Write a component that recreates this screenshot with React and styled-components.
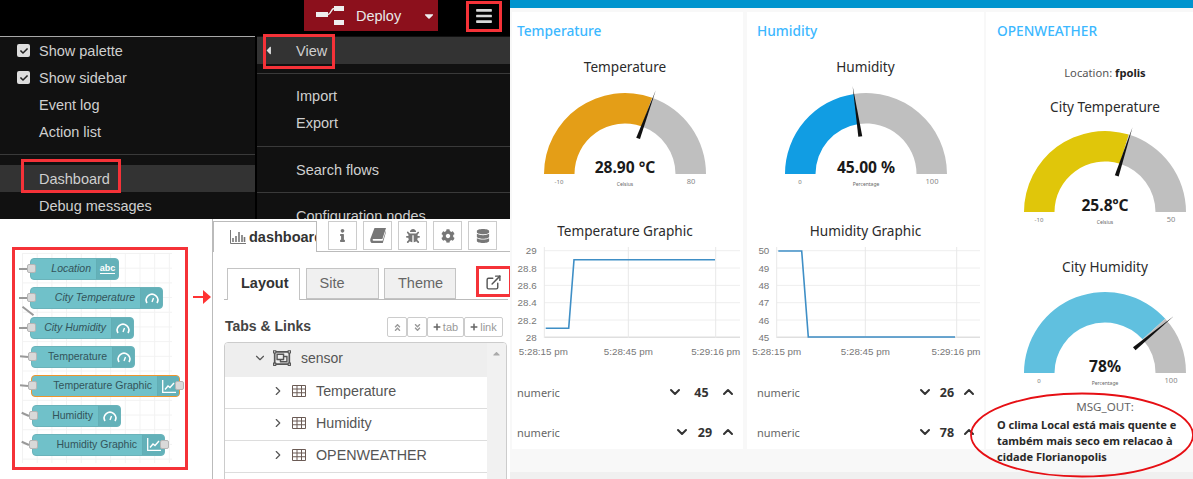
import styled, { createGlobalStyle } from "styled-components";
import { ChevronDown, ChevronRight, ChevronUp, ExternalLink } from "lucide-react";
import {
    FaAngleDoubleDown,
    FaAngleDoubleUp,
    FaBars,
    FaBug,
    FaCaretDown,
    FaCaretLeft,
    FaCaretUp,
    FaCheck,
    FaCog,
    FaDatabase,
    FaInfo,
    FaPlus,
    FaRegObjectGroup,
} from "react-icons/fa";

const GlobalStyle = createGlobalStyle`
    html, body {
        margin: 0;
        background: #ffffff;
        overflow: hidden;
    }
    * {
        box-sizing: border-box;
    }
`;

/*Drawings ------------*/
const DeployIcon = () => (
    <svg width="28" height="20" viewBox="0 0 28 20">
        <rect x="0" y="6" width="12" height="5" fill="#eee" />
        <rect x="18" y="0" width="10" height="5" fill="#eee" />
        <rect x="18" y="14" width="10" height="5" fill="#eee" />
        <path d="M12 8.5 C15 8.5 15 2.5 18 2.5" stroke="#eee" strokeWidth="1.5" fill="none" />
    </svg>
);

const BarsIcon = () => (
    <svg width="16" height="14" viewBox="0 0 16 14">
        <path d="M0.5 0V13.5H16" stroke="#777" fill="none" />
        <path d="M3 12V8M6 12V6M9 12V2M12 12V5M14.5 12V7" stroke="#777" strokeWidth="1.6" />
    </svg>
);

const BookIcon = () => (
    <svg width="16" height="15" viewBox="0 0 16 15">
        <path
            d="M4.5 0H16L12.4 11H3.6C2.4 11 2.2 12.8 3.6 12.8H12.6L16 2.5V4L12.8 15H2.6C0.6 15 -0.3 12.8 0.5 10.5Z"
            fill="currentColor"
        />
    </svg>
);

const TableIcon = () => (
    <svg width="14" height="12" viewBox="0 0 14 12">
        <path
            d="M0.5 0.5H13.5V11.5H0.5ZM0.5 4H13.5M0.5 7.75H13.5M5 0.5V11.5M9.5 0.5V11.5"
            stroke="#6b5b55"
            fill="none"
        />
    </svg>
);

const NodeGlyph = ({ kind }) => {
    if (kind === "abc") return <AbcText>abc</AbcText>;
    if (kind === "chart") {
        return (
            <svg width="14" height="13" viewBox="0 0 14 13">
                <path d="M0.7 0V12.3H14" stroke="#fff" strokeWidth="1.3" fill="none" />
                <path d="M3 9.5L6 6L8 7.5L12 3" stroke="#fff" strokeWidth="1.4" fill="none" />
            </svg>
        );
    }
    return (
        <svg width="14" height="12" viewBox="0 0 14 12">
            <path d="M2 11 A5.8 5.8 0 1 1 12 11" stroke="#fff" strokeWidth="1.6" fill="none" />
            <path d="M7 10 L8.5 6" stroke="#fff" strokeWidth="1.4" />
        </svg>
    );
};

const polar = (r, fraction) => {
    const angle = Math.PI * (1 - fraction);
    return [100 + r * Math.cos(angle), 91 - r * Math.sin(angle)];
};

const arc = (from, to) => {
    const [ax, ay] = polar(81, from);
    const [bx, by] = polar(81, to);
    const [cx, cy] = polar(50.5, to);
    const [dx, dy] = polar(50.5, from);
    return `M${ax} ${ay}A81 81 0 0 1 ${bx} ${by}L${cx} ${cy}A50.5 50.5 0 0 0 ${dx} ${dy}Z`;
};

const Gauge = ({ title, titleHeight, value, fraction, needle, color, min, max, unit }) => {
    const [bx, by] = polar(38, needle);
    const [tx, ty] = polar(89, needle);
    const angle = Math.PI * (1 - needle);
    const nx = 2 * Math.sin(angle);
    const ny = 2 * Math.cos(angle);

    return (
        <GaugeBlock>
            <WidgetTitle $height={titleHeight}>{title}</WidgetTitle>
            <GaugeSvg viewBox="0 0 200 110">
                <path d={arc(0, fraction)} fill={color} />
                <path d={arc(fraction, 1)} fill="#bfbfbf" />
                <path d={`M${bx - nx} ${by - ny}L${bx + nx} ${by + ny}L${tx} ${ty}Z`} fill="#111" />
                <GaugeValue x="100" y="90">{value}</GaugeValue>
                <GaugeMin x="34" y="101">{min}</GaugeMin>
                <GaugeMax x="166" y="101">{max}</GaugeMax>
                <GaugeUnit x="100" y="103">{unit}</GaugeUnit>
            </GaugeSvg>
        </GaugeBlock>
    );
};

const Chart = ({ title, grid, right, yLabels, xLabels, labelX, line }) => (
    <ChartBlock>
        <WidgetTitle $height={32}>{title}</WidgetTitle>
        <ChartSvg viewBox="0 0 240 110">
            {yLabels.map((label, i) => {
                const y = 3.7 + i * 17.33;
                const isAxis = i === yLabels.length - 1;
                return (
                    <g key={label}>
                        <line
                            x1={grid[0]}
                            x2={right}
                            y1={y}
                            y2={y}
                            stroke={isAxis ? "#dfdfdf" : "#eeeeee"}
                            strokeWidth={isAxis ? 1.5 : 1}
                        />
                        <AxisLabel x={labelX} y={y + 3.5} textAnchor="end">{label}</AxisLabel>
                    </g>
                );
            })}
            {grid.map((x) => (
                <line key={x} x1={x} x2={x} y1="0" y2="91" stroke="#e8e8e8" />
            ))}
            <polyline points={line} fill="none" stroke="#3f8fc6" strokeWidth="1.6" />
            {xLabels.map(([x, label]) => (
                <AxisLabel key={label} x={x} y="107.5" textAnchor="middle">{label}</AxisLabel>
            ))}
        </ChartSvg>
    </ChartBlock>
);

const Numeric = ({ inset, value, span }) => (
    <NumericRow $inset={inset}>
        <NumericLabel>numeric</NumericLabel>
        <ChevronDown size={16} strokeWidth={3} color="#333" />
        <NumericValue $width={span - 16}>{value}</NumericValue>
        <ChevronUp size={16} strokeWidth={3} color="#333" />
    </NumericRow>
);

const nodes = [
    { label: "Location", left: 8, width: 89, italic: true, icon: "abc" },
    { label: "City Temperature", left: 8, width: 133, italic: true, icon: "gauge" },
    { label: "City Humidity", left: 8, width: 104, italic: true, icon: "gauge" },
    { label: "Temperature", left: 9, width: 104, slant: 6, icon: "gauge" },
    { label: "Temperature Graphic", left: 9, width: 149, slant: 6, picked: true, output: true, icon: "chart" },
    { label: "Humidity", left: 10, width: 89, slant: 24, icon: "gauge" },
    { label: "Humidity Graphic", left: 10, width: 133, slant: 24, output: true, icon: "chart" },
];

const App = () => {
    return (
        <Root>
            <GlobalStyle />
            <LeftSide>
                <Header>
                    <DeployButton>
                        <DeployIcon />
                        <DeployText>Deploy</DeployText>
                        <FaCaretDown size={14} color="#eee" />
                    </DeployButton>
                    <FaBars size={18} color="#d8d8d8" />
                </Header>
                <MenuArea>
                    <Menu $lined>
                        <MenuRow><CheckBox><FaCheck size={8} color="#222" /></CheckBox>Show palette</MenuRow>
                        <MenuRow><CheckBox><FaCheck size={8} color="#222" /></CheckBox>Show sidebar</MenuRow>
                        <MenuRow>Event log</MenuRow>
                        <MenuRow>Action list</MenuRow>
                        <MenuDivider $below={10} />
                        <MenuRow $active>Dashboard</MenuRow>
                        <MenuRow>Debug messages</MenuRow>
                    </Menu>
                    <Menu>
                        <MenuRow $active>
                            <BackCaret><FaCaretLeft size={13} color="#ddd" /></BackCaret>
                            View
                        </MenuRow>
                        <MenuDivider $below={8} />
                        <MenuRow>Import</MenuRow>
                        <MenuRow>Export</MenuRow>
                        <MenuDivider $above={10} />
                        <MenuRow>Search flows</MenuRow>
                        <MenuDivider />
                        <MenuRow>Configuration nodes</MenuRow>
                    </Menu>
                </MenuArea>
                <BottomArea>
                    <NodePane>
                        <NodeList>
                            {nodes.map((node) => (
                                <FlowNode
                                    key={node.label}
                                    $left={node.left}
                                    $width={node.width}
                                    $picked={node.picked}
                                >
                                    <Port $slant={node.slant || 0} />
                                    <NodeLabel $italic={node.italic}>{node.label}</NodeLabel>
                                    <NodeIcon><NodeGlyph kind={node.icon} /></NodeIcon>
                                    {node.output && <OutPort />}
                                </FlowNode>
                            ))}
                            <SlantWire />
                        </NodeList>
                    </NodePane>
                    <Sidebar>
                        <TabBar>
                            <MainTab><BarsIcon /><MainTabText>dashboard</MainTabText></MainTab>
                            <ToolButton><FaInfo size={13} /></ToolButton>
                            <ToolButton><BookIcon /></ToolButton>
                            <ToolButton><FaBug size={14} /></ToolButton>
                            <ToolButton><FaCog size={14} /></ToolButton>
                            <ToolButton><FaDatabase size={14} /></ToolButton>
                        </TabBar>
                        <SectionTabs>
                            <SectionTab $active $width={73}>Layout</SectionTab>
                            <SectionTab $width={73}>Site</SectionTab>
                            <SectionTab $width={72}>Theme</SectionTab>
                            <OpenLink><ExternalLink size={17} color="#555" /></OpenLink>
                        </SectionTabs>
                        <ListHeading>
                            <ListTitle>Tabs &amp; Links</ListTitle>
                            <ButtonGroup>
                                <SmallButton $width={20}><FaAngleDoubleUp size={9} /></SmallButton>
                                <SmallButton $width={20}><FaAngleDoubleDown size={9} /></SmallButton>
                                <SmallButton $width={37}><FaPlus size={8} color="#666" />tab</SmallButton>
                                <SmallButton $width={39}><FaPlus size={8} color="#666" />link</SmallButton>
                            </ButtonGroup>
                        </ListHeading>
                        <TreeBox>
                            <TreeRows>
                                <TabRow>
                                    <ChevronDown size={14} color="#555" />
                                    <FaRegObjectGroup size={18} color="#555" />
                                    sensor
                                </TabRow>
                                {["Temperature", "Humidity", "OPENWEATHER"].map((name) => (
                                    <GroupRow key={name}>
                                        <ChevronRight size={14} color="#555" />
                                        <TableIcon />
                                        {name}
                                    </GroupRow>
                                ))}
                            </TreeRows>
                            <ScrollRail><FaCaretUp size={11} color="#aaa" /></ScrollRail>
                        </TreeBox>
                    </Sidebar>
                </BottomArea>
                <Callout $left={466} $top={1} $width={36} $height={31} />
                <Callout $left={263} $top={34} $width={72} $height={35} />
                <Callout $left={21} $top={159} $width={100} $height={34} />
                <Callout $left={12} $top={247} $width={176} $height={223} />
                <Callout $left={476} $top={266} $width={36} $height={31} />
                <FlowArrow width="18" height="14" viewBox="0 0 18 14">
                    <path d="M0 7H11" stroke="#f33" strokeWidth="2" />
                    <path d="M10 0L18 7L10 14Z" fill="#f33" />
                </FlowArrow>
            </LeftSide>

            <Dashboard>
                <TopStrip />
                <Groups>
                    <Group $width={231} $trim={5}>
                        <GroupTitle $inset={5}>Temperature</GroupTitle>
                        <Gauge
                            title="Temperature"
                            titleHeight={33}
                            value="28.90 °C"
                            fraction={0.609}
                            needle={0.612}
                            color="#e49e17"
                            min="-10"
                            max="80"
                            unit="Celsius"
                        />
                        <Chart
                            title="Temperature Graphic"
                            grid={[32.3, 116.3, 203.7]}
                            right={228}
                            labelX={24.7}
                            yLabels={["29", "28.8", "28.6", "28.4", "28.2", "28"]}
                            xLabels={[[31.3, "5:28:15 pm"], [116.3, "5:28:45 pm"], [203.7, "5:29:16 pm"]]}
                            line="33.7,81.3 56.7,81.3 62,12.7 203,12.7"
                        />
                        <NumericList>
                            <Numeric inset={5} value="45" span={53} />
                            <Numeric inset={5} value="29" span={46} />
                        </NumericList>
                    </Group>
                    <Group $width={237}>
                        <GroupTitle $inset={10}>Humidity</GroupTitle>
                        <Gauge
                            title="Humidity"
                            titleHeight={33}
                            value="45.00 %"
                            fraction={0.453}
                            needle={0.452}
                            color="#119de3"
                            min="0"
                            max="100"
                            unit="Percentage"
                        />
                        <Chart
                            title="Humidity Graphic"
                            grid={[29.7, 118.3, 209.7]}
                            right={233}
                            labelX={22.3}
                            yLabels={["50", "49", "48", "47", "46", "45"]}
                            xLabels={[[29.7, "5:28:15 pm"], [118.3, "5:28:45 pm"], [209, "5:29:16 pm"]]}
                            line="31.3,4 54.7,4 61.3,90 208,90"
                        />
                        <NumericList>
                            <Numeric inset={10} value="26" span={44} />
                            <Numeric inset={10} value="78" span={44} />
                        </NumericList>
                    </Group>
                    <Group $width={238}>
                        <GroupTitle $inset={11}>OPENWEATHER</GroupTitle>
                        <LocationLine>Location: <b>fpolis</b></LocationLine>
                        <Gauge
                            title="City Temperature"
                            titleHeight={28}
                            value="25.8ºC"
                            fraction={0.595}
                            needle={0.6}
                            color="#e0c60a"
                            min="-10"
                            max="50"
                            unit="Celsius"
                        />
                        <GaugeSpacer />
                        <Gauge
                            title="City Humidity"
                            titleHeight={30}
                            value="78%"
                            fraction={0.767}
                            needle={0.78}
                            color="#60c0df"
                            min="0"
                            max="100"
                            unit="Percentage"
                        />
                        <MessageLabel>MSG_OUT:</MessageLabel>
                        <MessageText>
                            O clima Local está mais quente e também mais seco em relacao à cidade Florianopolis
                        </MessageText>
                    </Group>
                </Groups>
                <BottomStrip />
                <MessageRing width="226" height="88" viewBox="0 0 226 88">
                    <ellipse cx="112" cy="44" rx="111" ry="41.5" fill="none" stroke="#e60f14" strokeWidth="1.8" />
                </MessageRing>
            </Dashboard>
        </Root>
    );
};

export default App;

const Root = styled.div`
    display: flex;
    width: 1193px;
    height: 479px;
    overflow: hidden;
`;

/*Node-RED side ------------*/
const LeftSide = styled.div`
    position: relative;
    width: 510px;
    height: 479px;
    flex: none;
    font-family: "Liberation Sans", Arial, sans-serif;
`;

const Header = styled.div`
    display: flex;
    justify-content: flex-end;
    align-items: flex-start;
    gap: 37px;
    height: 36px;
    padding-right: 17px;
    background: #000000;

    > svg {
        margin-top: 7px;
    }
`;

const DeployButton = styled.div`
    display: flex;
    align-items: center;
    width: 134px;
    height: 31px;
    padding-left: 12px;
    background: #8c101c;
`;

const DeployText = styled.span`
    width: 66px;
    margin-left: 12px;
    color: #e8e8e8;
    font-size: 14.5px;
`;

const MenuArea = styled.div`
    display: flex;
    justify-content: space-between;
    height: 183px;
    overflow: hidden;
    background: #000000;
`;

const Menu = styled.div`
    width: ${(p) => (p.$lined ? "255px" : "253px")};
    padding-top: ${(p) => (p.$lined ? "0" : "1px")};
    background: #111111;
    border-top: ${(p) => (p.$lined ? "1px solid #a8a8a8" : "none")};
`;

const MenuRow = styled.div`
    position: relative;
    display: flex;
    align-items: center;
    height: 27px;
    padding-left: 39px;
    color: #cfcfcf;
    font-size: 14.5px;
    white-space: nowrap;
    background: ${(p) => (p.$active ? "#333333" : "transparent")};
`;

const CheckBox = styled.span`
    position: absolute;
    left: 17px;
    top: 7px;
    display: flex;
    align-items: center;
    justify-content: center;
    width: 13px;
    height: 13px;
    border-radius: 2px;
    background: #dddddd;
`;

const BackCaret = styled.span`
    position: absolute;
    left: 5px;
    top: 7px;
    display: flex;
`;

const MenuDivider = styled.div`
    height: 1px;
    margin: ${(p) => p.$above || 9}px 0 ${(p) => p.$below || 9}px;
    background: #3a3a3a;
`;

const Callout = styled.div`
    position: absolute;
    left: ${(p) => p.$left}px;
    top: ${(p) => p.$top}px;
    width: ${(p) => p.$width}px;
    height: ${(p) => p.$height}px;
    border: 3px solid #f53238;
    pointer-events: none;
`;

const FlowArrow = styled.svg`
    position: absolute;
    left: 193px;
    top: 290px;
`;

const BottomArea = styled.div`
    display: flex;
    height: 260px;
    background: #ffffff;
`;

const NodePane = styled.div`
    width: 212px;
    padding: 34px 0 0 22px;
`;

const NodeList = styled.div`
    position: relative;
    display: flex;
    flex-direction: column;
    gap: 7.33px;
    width: 150px;
    height: 210px;
    padding-top: 5px;
    background-image:
        linear-gradient(#f2f2f2 1px, transparent 1px),
        linear-gradient(90deg, #f2f2f2 1px, transparent 1px);
    background-size: 14.7px 14.7px;
`;

const FlowNode = styled.div`
    position: relative;
    display: flex;
    flex: none;
    width: ${(p) => p.$width}px;
    height: 22px;
    margin-left: ${(p) => p.$left}px;
    border: 1px solid ${(p) => (p.$picked ? "#f0952c" : "#6bb3ba")};
    border-radius: 4px;
    background: #70c1c9;
`;

const Port = styled.span`
    position: absolute;
    left: -4px;
    top: 5px;
    width: 9px;
    height: 9px;
    border-radius: 2px;
    border: 1px solid #b5b5b5;
    background: #d9d9d9;

    &::before {
        content: "";
        position: absolute;
        right: 8px;
        top: 3px;
        width: 8px;
        height: 2px;
        background: #999999;
        transform-origin: right center;
        transform: rotate(${(p) => p.$slant}deg);
    }
`;

const OutPort = styled.span`
    position: absolute;
    right: -5px;
    top: 5px;
    width: 9px;
    height: 9px;
    border-radius: 2px;
    border: 1px solid #b5b5b5;
    background: #d9d9d9;
`;

const SlantWire = styled.span`
    position: absolute;
    left: -1px;
    top: 57px;
    width: 14px;
    height: 2px;
    background: #999999;
    transform: rotate(38deg);
`;

const NodeLabel = styled.span`
    flex: 1;
    padding-right: 5px;
    color: #33545a;
    font-size: 10.5px;
    font-style: ${(p) => (p.$italic ? "italic" : "normal")};
    line-height: 19px;
    text-align: right;
    white-space: nowrap;
`;

const NodeIcon = styled.span`
    display: flex;
    flex: none;
    align-items: center;
    justify-content: center;
    width: 22px;
    border-left: 1px solid #62aeb5;
    border-radius: 0 3px 3px 0;
    background: #63b1b9;
`;

const AbcText = styled.span`
    border-bottom: 1px solid #ffffff;
    color: #ffffff;
    font-size: 9px;
    font-weight: 700;
    line-height: 9px;
`;

const Sidebar = styled.div`
    width: 298px;
    height: 260px;
    overflow: hidden;
    border-left: 1px solid #bbbbbb;
`;

const TabBar = styled.div`
    display: flex;
    align-items: flex-start;
    gap: 6px;
    height: 33px;
    padding-top: 2px;
    border-bottom: 1px solid #bbbbbb;
`;

const MainTab = styled.div`
    display: flex;
    align-items: center;
    gap: 3px;
    flex: none;
    width: 104px;
    height: 31px;
    margin-right: 5px;
    padding-left: 16px;
    overflow: hidden;
    border: 1px solid #bbbbbb;
    border-bottom: none;
    background: #ffffff;

    > svg {
        flex: none;
    }
`;

const MainTabText = styled.span`
    color: #333333;
    font-size: 14.5px;
    font-weight: 700;
`;

const ToolButton = styled.div`
    display: flex;
    align-items: center;
    justify-content: center;
    flex: none;
    width: 29px;
    height: 29px;
    border: 1px solid #cccccc;
    color: #777777;
`;

const SectionTabs = styled.div`
    display: flex;
    align-items: flex-end;
    gap: 5.5px;
    height: 32px;
    margin: 16px 2px 0 11px;
    padding-left: 3px;
    border-bottom: 1px solid #bbbbbb;
`;

const SectionTab = styled.div`
    width: ${(p) => p.$width}px;
    height: ${(p) => (p.$active ? "32px" : "31px")};
    margin-bottom: ${(p) => (p.$active ? "-1px" : "0")};
    padding-left: 13px;
    border: 1px solid #c4c4c4;
    border-bottom: ${(p) => (p.$active ? "none" : "1px solid #c4c4c4")};
    color: ${(p) => (p.$active ? "#333333" : "#666666")};
    background: ${(p) => (p.$active ? "#ffffff" : "#f0f0f0")};
    font-size: 14.5px;
    font-weight: ${(p) => (p.$active ? 700 : 400)};
    line-height: 29px;
`;

const OpenLink = styled.span`
    display: flex;
    margin: 0 6px 8px auto;
`;

const ListHeading = styled.div`
    display: flex;
    align-items: center;
    justify-content: space-between;
    height: 20px;
    margin: 17px 7px 0 12px;
`;

const ListTitle = styled.span`
    margin-top: -2px;
    color: #444444;
    font-size: 14px;
    font-weight: 700;
`;

const ButtonGroup = styled.div`
    display: flex;
`;

const SmallButton = styled.span`
    display: flex;
    align-items: center;
    justify-content: center;
    gap: 2px;
    width: ${(p) => p.$width}px;
    height: 20px;
    border: 1px solid #cccccc;
    border-radius: 2px;
    color: #999999;
    font-size: 11px;
`;

const TreeBox = styled.div`
    display: flex;
    height: 150px;
    margin: 5px 3px 0 11px;
    overflow: hidden;
    border: 1px solid #cccccc;
    border-radius: 4px;
`;

const TreeRows = styled.div`
    flex: 1;
`;

const TabRow = styled.div`
    display: flex;
    align-items: center;
    gap: 6px;
    height: 34px;
    padding: 0 0 4px 28px;
    color: #555555;
    background: #eeeeee;
    font-size: 14px;

    > svg:last-of-type {
        margin-right: 4px;
    }
`;

const GroupRow = styled.div`
    display: flex;
    align-items: center;
    gap: 7px;
    height: 32px;
    padding: 0 0 3px 46px;
    border-bottom: 1px solid #dddddd;
    color: #555555;
    font-size: 14.3px;

    > svg:last-of-type {
        margin-right: 3px;
    }
`;

const ScrollRail = styled.div`
    display: flex;
    justify-content: center;
    flex: none;
    width: 19px;
    padding-top: 5px;
    background: #f1f1f1;
`;

/*Dashboard side ------------*/
const Dashboard = styled.div`
    position: relative;
    width: 683px;
    height: 479px;
    flex: none;
    padding-left: 2px;
    font-family: "Noto Sans", sans-serif;
    background: #f0f0f0;
`;

const TopStrip = styled.div`
    height: 8px;
    margin-left: -2px;
    background: #0094ce;
`;

const Groups = styled.div`
    display: flex;
    gap: 4px;
    height: 464px;
    margin-left: -2px;
    padding: 4px 0 0 2px;
    background: #f8f8f8;
`;

const Group = styled.section`
    flex: none;
    width: ${(p) => p.$width}px;
    height: 437px;
    padding-right: ${(p) => p.$trim || 0}px;
    background: #ffffff;

    & + & + & {
        margin-left: -2px;
    }
`;

const GroupTitle = styled.h2`
    height: 38px;
    margin: 0;
    padding-left: ${(p) => p.$inset}px;
    color: #3cb8ff;
    font-size: 13.7px;
    font-weight: 500;
    line-height: 38px;
`;

const GaugeBlock = styled.div`
    text-align: center;
`;

const WidgetTitle = styled.div`
    height: ${(p) => p.$height}px;
    color: #2b2b2b;
    font-size: 13.6px;
    line-height: ${(p) => p.$height}px;
    text-align: center;
`;

const GaugeSvg = styled.svg`
    display: block;
    width: 200px;
    height: 110px;
    margin: 0 auto;
`;

const GaugeValue = styled.text`
    fill: #1a1a1a;
    font-size: 15.6px;
    font-weight: 700;
    text-anchor: middle;
`;

const GaugeMin = styled.text`
    fill: #777777;
    font-size: 6px;
    text-anchor: middle;
`;

const GaugeMax = styled.text`
    fill: #888888;
    font-size: 7.5px;
    text-anchor: middle;
`;

const GaugeUnit = styled.text`
    fill: #666666;
    font-size: 5px;
    text-anchor: middle;
`;

const ChartBlock = styled.div`
    margin-top: 22px;
`;

const ChartSvg = styled.svg`
    display: block;
    width: 240px;
    height: 110px;
    overflow: visible;
`;

const AxisLabel = styled.text`
    fill: #777777;
    font-family: "Liberation Sans", Arial, sans-serif;
    font-size: 9.8px;
`;

const NumericList = styled.div`
    margin-top: 15px;
`;

const NumericRow = styled.div`
    display: flex;
    align-items: center;
    height: 40px;
    padding: 0 ${(p) => p.$inset - 3}px 0 ${(p) => p.$inset}px;
`;

const NumericLabel = styled.span`
    flex: 1;
    color: #666666;
    font-size: 11px;
`;

const NumericValue = styled.span`
    width: ${(p) => p.$width}px;
    color: #333333;
    font-size: 12.5px;
    font-weight: 700;
    text-align: center;
`;

const LocationLine = styled.div`
    height: 43px;
    padding-top: 13px;
    color: #555555;
    font-size: 11.2px;
    line-height: 20px;
    text-align: center;

    b {
        color: #222222;
    }
`;

const GaugeSpacer = styled.div`
    height: 21px;
`;

const MessageLabel = styled.div`
    height: 20px;
    margin-top: 5px;
    color: #666666;
    font-size: 11.6px;
    line-height: 20px;
    text-align: center;
`;

const MessageText = styled.div`
    width: 190px;
    margin-left: 11px;
    color: #2a2a2a;
    font-size: 11px;
    font-weight: 700;
    line-height: 16px;
`;

const BottomStrip = styled.div`
    height: 7px;
`;

const MessageRing = styled.svg`
    position: absolute;
    left: 460px;
    top: 391px;
    pointer-events: none;
`;
